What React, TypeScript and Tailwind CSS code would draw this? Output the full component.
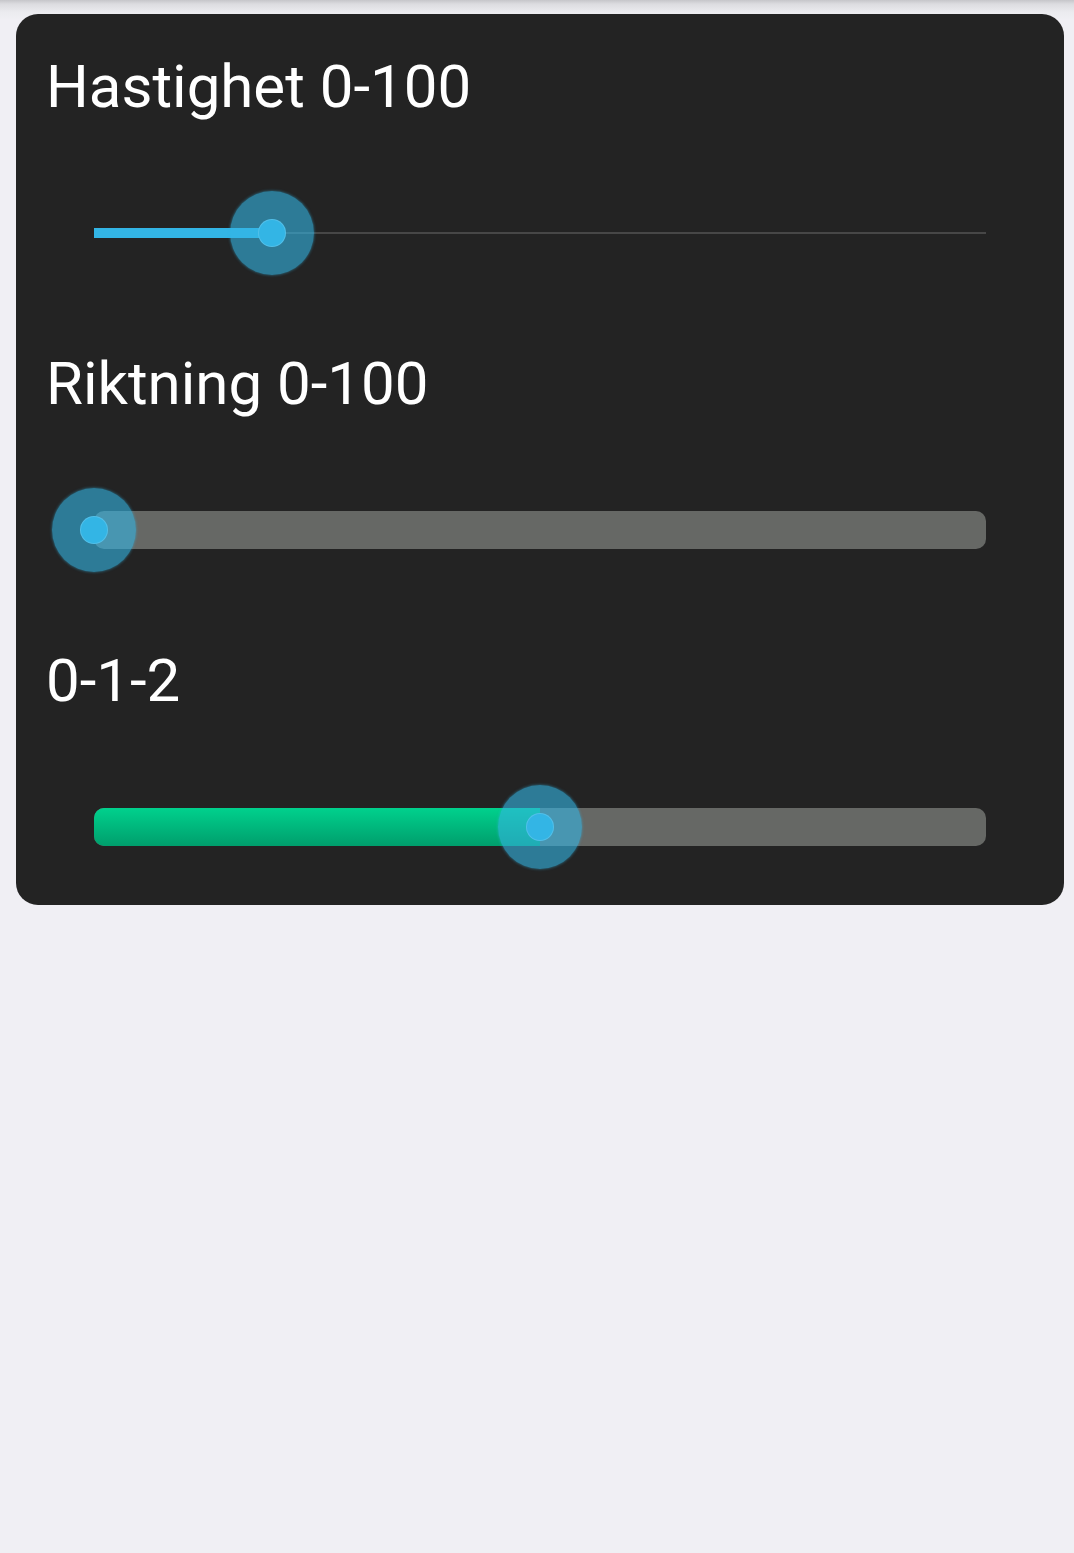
import React from 'react'

type SliderProps = {
  value: number
  max: number
  variant: 'thin' | 'thick' | 'green'
}

function Thumb({ pct }: { pct: number }) {
  return (
    <div
      className="absolute top-1/2 w-[84px] h-[84px] -translate-x-1/2 -translate-y-1/2 rounded-full bg-[#33b5e5]/60 shadow-[0_0_3px_rgba(51,181,229,0.6)] flex items-center justify-center"
      style={{ left: `${pct}%` }}
    >
      <div className="w-[28px] h-[28px] rounded-full bg-[#33b5e5] border border-[#5ec5ec]/70" />
    </div>
  )
}

function Slider({ value, max, variant }: SliderProps) {
  const pct = (value / max) * 100

  return (
    <div className="px-[46px]">
      <div className="relative h-[84px] flex items-center">
        {variant === 'thin' && (
          <>
            <div className="w-full h-[2px] bg-[#474747]" />
            <div className="absolute left-0 top-1/2 -translate-y-1/2 h-[10px] bg-[#33b5e5]" style={{ width: `${pct}%` }} />
          </>
        )}
        {variant === 'thick' && <div className="w-full h-[38px] rounded-[10px] bg-[#666865]" />}
        {variant === 'green' && (
          <div className="relative w-full h-[38px] rounded-[10px] bg-[#666865] overflow-hidden">
            <div
              className="absolute left-0 top-0 h-full bg-[linear-gradient(to_bottom,#00d18d,#009e6c)]"
              style={{ width: `${pct}%` }}
            />
          </div>
        )}
        <Thumb pct={pct} />
      </div>
    </div>
  )
}

export default function App() {
  const rows: { label: string; value: number; max: number; variant: SliderProps['variant'] }[] = [
    { label: 'Hastighet 0-100', value: 20, max: 100, variant: 'thin' },
    { label: 'Riktning 0-100', value: 0, max: 100, variant: 'thick' },
    { label: '0-1-2', value: 1, max: 2, variant: 'green' },
  ]

  return (
    <div className="min-h-[1553px] bg-[linear-gradient(to_bottom,#c6c6ca_0px,#dcdce0_4px,#ebebef_12px,#f0eff4_20px)] pt-[14px] pl-[16px] pr-[10px] font-['Roboto',sans-serif]">
      <div className="bg-[#232323] rounded-[22px] px-[32px] pt-[37px] pb-[36px] flex flex-col gap-[73px]">
        {rows.map((r) => (
          <div key={r.label}>
            <h2 className="-ml-[2px] text-white text-[60px] leading-[72px] font-normal">{r.label}</h2>
            <div className="mt-[68px]">
              <Slider value={r.value} max={r.max} variant={r.variant} />
            </div>
          </div>
        ))}
      </div>
    </div>
  )
}
